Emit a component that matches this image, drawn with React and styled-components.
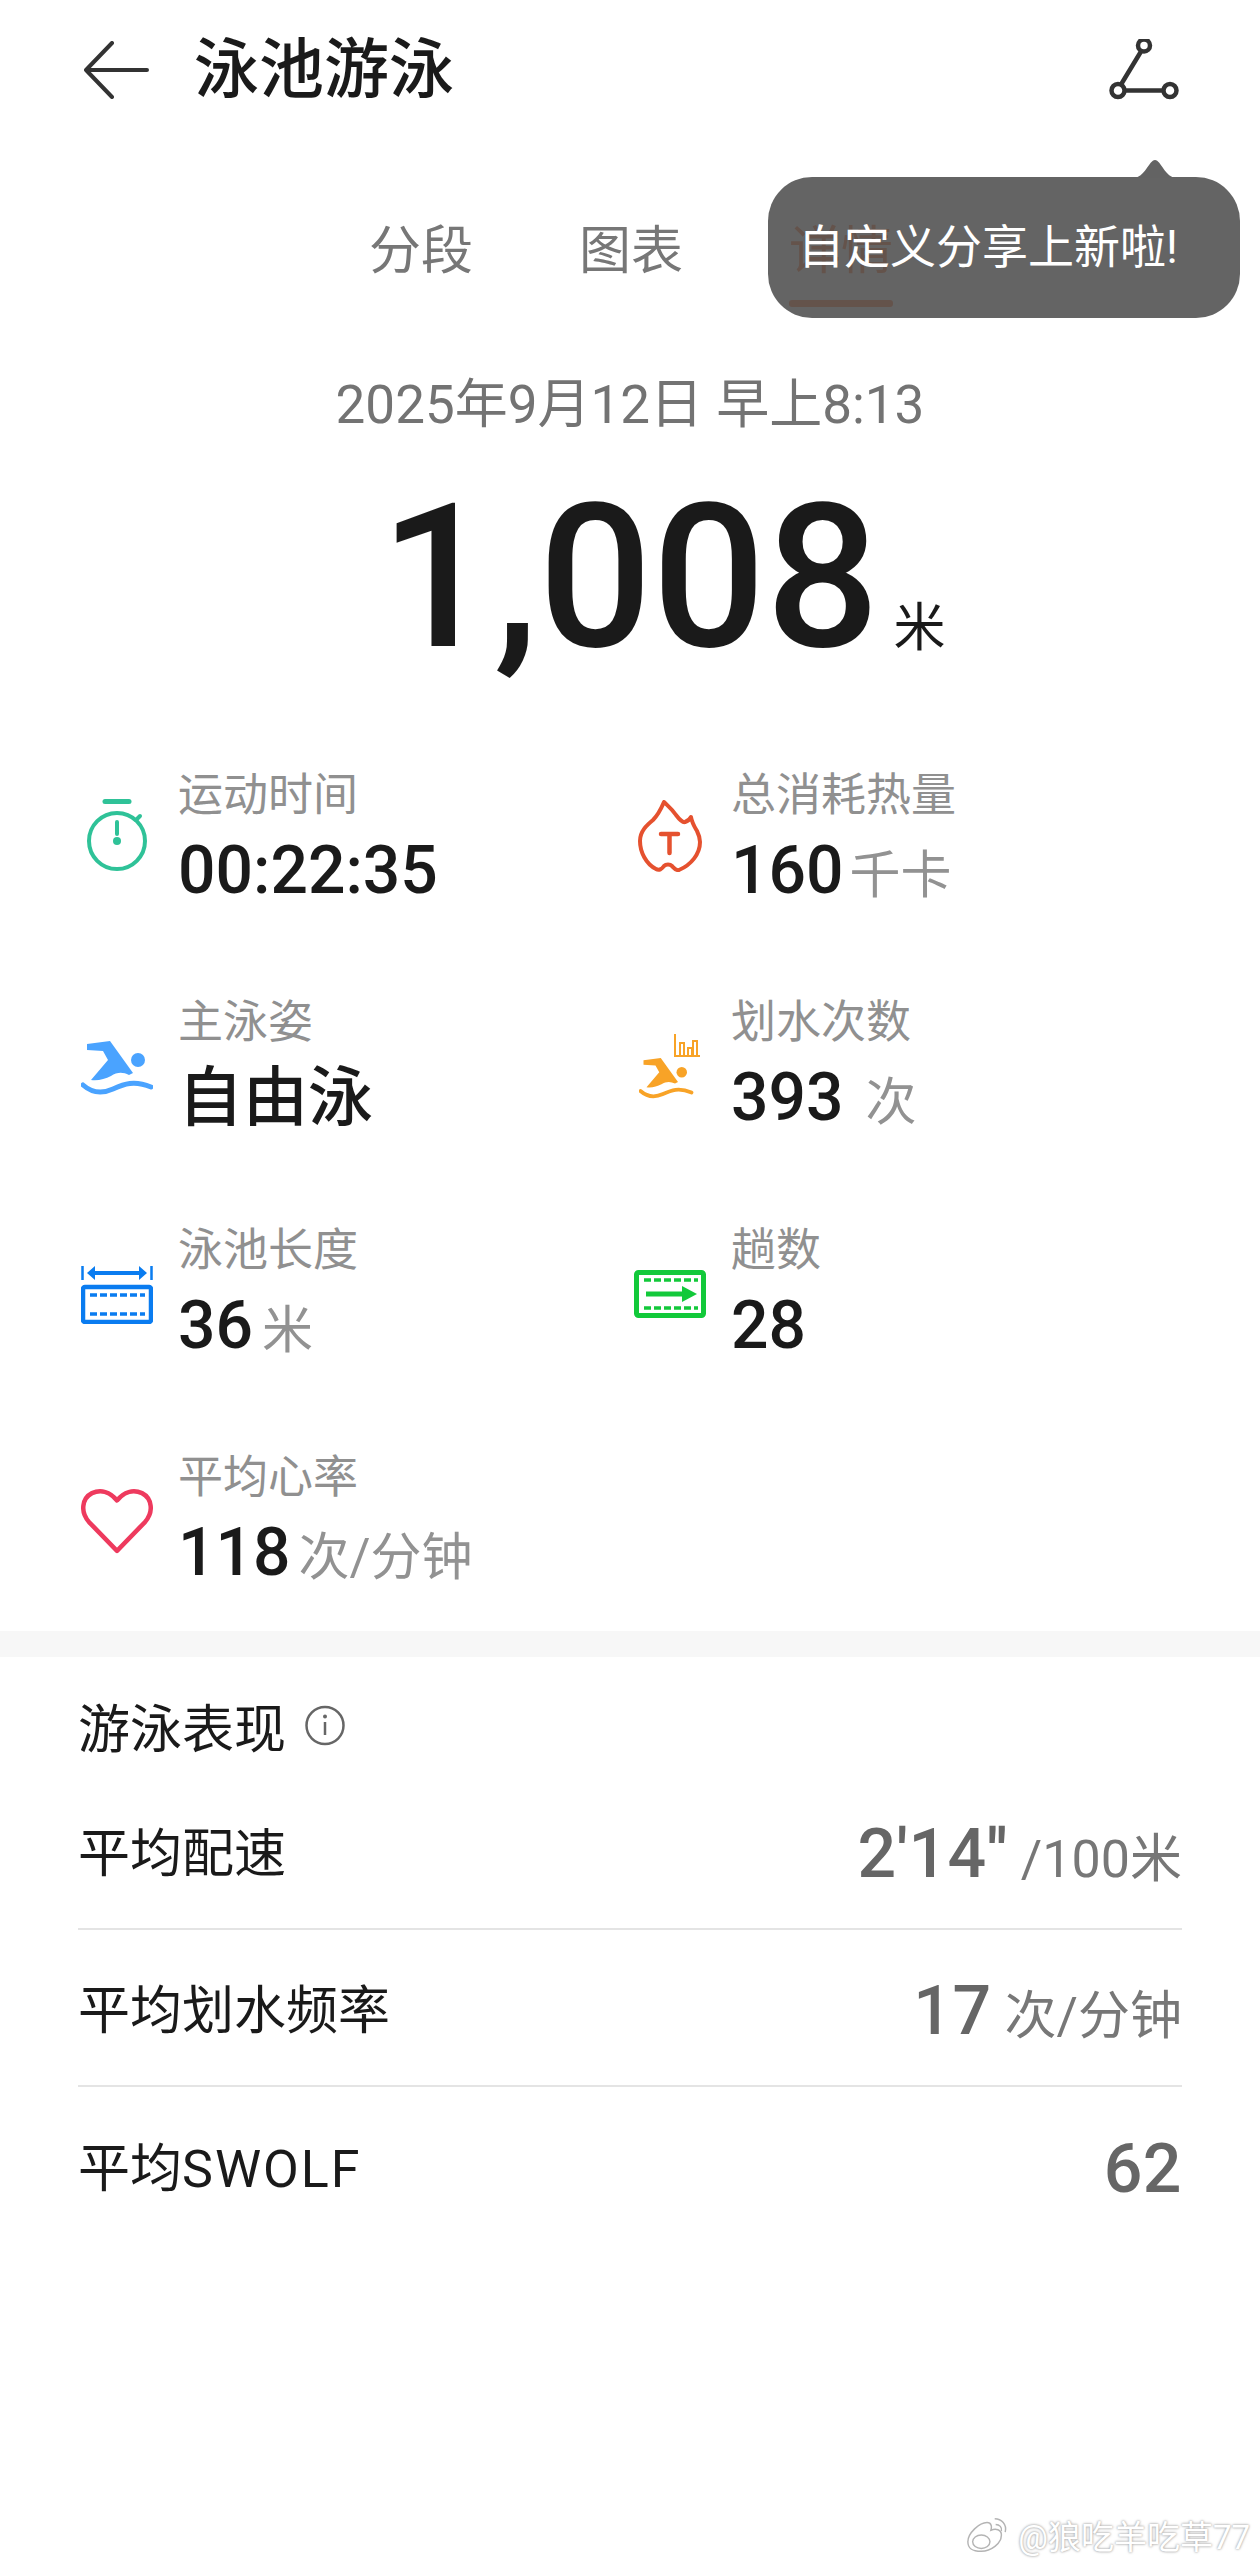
import React from "react";
import styled, { createGlobalStyle } from "styled-components";

const GlobalStyle = createGlobalStyle`
    html, body {
        margin: 0;
        padding: 0;
        background: #fff;
    }
    * {
        box-sizing: border-box;
    }
`;

const Page = styled.div`
    position: relative;
    width: 1260px;
    height: 2568px;
    overflow: hidden;
    background: #fff;
    color: #1a1a1a;
    font-family: Roboto, "Noto Sans CJK SC", sans-serif;
`;

const Header = styled.header`
    height: 136px;
    padding: 4px 81px 0 84px;
    display: flex;
    align-items: center;
`;

const Title = styled.h1`
    margin: 0 0 0 45px;
    flex: 1;
    font-size: 65px;
    line-height: 80px;
    font-weight: 500;
`;

const Tabs = styled.nav`
    height: 172px;
    padding: 83px 0 0 2px;
    display: flex;
    justify-content: center;
    align-items: flex-start;
    gap: 106px;
`;

const Tab = styled.div`
    position: relative;
    font-size: 52px;
    line-height: 66px;
    color: ${(p) => (p.$active ? "#ff7137" : "#777")};
    &::after {
        content: "";
        display: ${(p) => (p.$active ? "block" : "none")};
        position: absolute;
        left: 0;
        right: 0;
        bottom: -22px;
        height: 7px;
        border-radius: 3px;
        background: #ff7137;
    }
`;

const Tooltip = styled.div`
    position: absolute;
    left: 768px;
    top: 177px;
    width: 472px;
    height: 141px;
    padding: 0 0 10px 30px;
    display: flex;
    align-items: center;
    border-radius: 44px;
    background: rgba(78, 78, 78, 0.88);
    color: #fff;
    font-size: 46px;
    svg {
        position: absolute;
        left: 357px;
        top: -17px;
    }
`;

const DateLine = styled.div`
    margin-top: 62px;
    text-align: center;
    font-size: 53px;
    line-height: 70px;
    color: #737373;
`;

const Total = styled.div`
    height: 256px;
    padding: 20px 0 0 380px;
    display: flex;
    align-items: baseline;
    gap: 14px;
`;

const TotalValue = styled.span`
    font-size: 200px;
    line-height: 236px;
    font-weight: 500;
`;

const TotalUnit = styled.span`
    font-size: 52px;
`;

const StatGrid = styled.section`
    padding: 69px 0 0 81px;
    display: grid;
    grid-template-columns: 553px 553px;
    grid-auto-rows: 227.3px;
`;

const Stat = styled.div`
    display: flex;
    gap: 25px;
`;

const IconBox = styled.div`
    width: 72px;
    height: 156px;
    padding-top: ${(p) => p.$top}px;
    display: flex;
    justify-content: center;
    align-items: flex-start;
    flex-shrink: 0;
`;

const StatText = styled.div`
    display: flex;
    flex-direction: column;
`;

const StatLabel = styled.div`
    font-size: 45px;
    line-height: 62px;
    color: #909090;
`;

const StatValue = styled.div`
    height: 88px;
    display: flex;
    align-items: baseline;
    gap: ${(p) => p.$gap}px;
    font-size: ${(p) => (p.$cjk ? 65 : 66)}px;
    line-height: 88px;
    font-weight: 500;
    color: #1a1a1a;
`;

const StatUnit = styled.span`
    font-size: 51px;
    font-weight: 400;
    color: #929292;
`;

const Band = styled.div`
    height: 26px;
    margin-top: -43px;
    background: #f7f7f7;
`;

const Performance = styled.section`
    padding: 0 78px;
`;

const SectionTitle = styled.h2`
    height: 116px;
    margin: 0;
    padding-top: 20px;
    display: flex;
    align-items: center;
    gap: 19px;
    font-size: 52px;
    font-weight: 400;
    color: #1a1a1a;
`;

const MetricRow = styled.div`
    height: 157px;
    padding-bottom: 2px;
    display: flex;
    justify-content: space-between;
    align-items: center;
    border-bottom: ${(p) => (p.$last ? "none" : "2px solid #e4e4e4")};
`;

const MetricName = styled.span`
    font-size: 52px;
    color: #1a1a1a;
`;

const LatinName = styled.span`
    letter-spacing: 2px;
`;

const MetricValue = styled.span`
    padding-top: 8px;
    display: flex;
    align-items: baseline;
    gap: 13px;
    font-size: 68px;
    font-weight: 500;
    letter-spacing: 0.5px;
    color: #666;
`;

const MetricUnit = styled.span`
    font-size: 52px;
    font-weight: 400;
    letter-spacing: 0;
    color: #777;
`;

const Watermark = styled.div`
    position: absolute;
    right: 10px;
    bottom: 9px;
    display: flex;
    align-items: center;
    gap: 7px;
    font-size: 33px;
    color: #fff;
    text-shadow: 0 0 3px #a8a8a8, 0 0 2px #b8b8b8;
`;

const BackIcon = () => (
    <svg width="65" height="58" viewBox="0 0 65 58" fill="none" stroke="#333" strokeWidth="4" strokeLinecap="round" strokeLinejoin="round">
        <path d="M28 2 2 29l26 27M2 29h61" />
    </svg>
);

const ShareIcon = () => (
    <svg width="70" height="62" viewBox="0 1.500 70 62" fill="none" stroke="#333" strokeWidth="4.500">
        <circle cx="35" cy="8" r="6" />
        <circle cx="9" cy="53" r="6.500" />
        <circle cx="61" cy="53" r="6.500" />
        <path d="M32 14 12 47M16 53h38" />
    </svg>
);

const Stopwatch = () => (
    <svg width="62" height="72" viewBox="0 0 62 72" fill="none" stroke="#2fc298" strokeWidth="4" strokeLinecap="round">
        <path d="M19 2.500h24" strokeWidth="5" />
        <circle cx="31" cy="42" r="28" />
        <path d="M50 21l4-4M31 23v12" />
        <circle cx="31" cy="42" r="4" fill="#2fc298" stroke="none" />
    </svg>
);

const Flame = () => (
    <svg width="64" height="72" viewBox="0 0 64 72" fill="none" stroke="#e5512f" strokeWidth="4" strokeLinecap="round" strokeLinejoin="round">
        <path d="M26 2C30 6 34 9 38 15 41 19 45 23 47 22 50 21 52 19 53 17 54 23 56 26 59 31 61 35 62 38 62 42 62 54 53 65 41 70 38 71 36 68 34 66 32 64 28 64 26 66 24 69 21 71 18 69 8 64 2 52 2 41 2 31 9 25 15 20 20 15 23 9 26 2z" />
        <path d="M23 34h17M31.500 34v19" strokeWidth="4.500" />
    </svg>
);

const Swimmer = ({ color }) => (
    <svg width="72" height="56" viewBox="0 0 72 56" fill={color}>
        <path d="M6 3 29 0 l23 32 -4 2c-6 -3 -12 -3 -18 1 -6 3 -13 5 -20 4 l17 -20 -5 -9 -16 -1z" />
        <circle cx="57" cy="19" r="7" />
        <path d="M2 44c9 8 19 9 30 4s21-9 38-2" fill="none" stroke={color} strokeWidth="5" strokeLinecap="round" />
    </svg>
);

const SwimmerBars = () => (
    <svg width="62" height="68" viewBox="0 0 62 68" fill="none" stroke="#f8a327">
        <g strokeWidth="2">
            <path d="M36 1v22h25" />
            <path d="M41 23V10h4v13M49 23v-8h4v8M54 23V8h4v15" />
        </g>
        <g transform="translate(0 25) scale(.75)" fill="#f8a327" stroke="none">
            <path d="M6 3 29 0 l23 32 -4 2c-6 -3 -12 -3 -18 1 -6 3 -13 5 -20 4 l17 -20 -5 -9 -16 -1z" />
            <circle cx="57" cy="19" r="7" />
            <path d="M2 44c9 8 19 9 30 4s21-9 38-2" fill="none" stroke="#f8a327" strokeWidth="5" strokeLinecap="round" />
        </g>
    </svg>
);

const PoolLength = () => (
    <svg width="72" height="58" viewBox="0 0 72 58" fill="none" stroke="#0a7cf0">
        <path d="M1.500 0v14M70.500 0v14" strokeWidth="2.500" />
        <path d="M12 7h48" strokeWidth="4" />
        <path d="M14 0 6 7l8 7zM58 0l8 7-8 7z" fill="#0a7cf0" stroke="none" />
        <rect x="2" y="21" width="68" height="35" rx="2" strokeWidth="4.500" />
        <path d="M9 29h55M9 48h55" strokeWidth="3.500" strokeDasharray="7 3" />
    </svg>
);

const Laps = () => (
    <svg width="72" height="48" viewBox="0 0 72 48" fill="none" stroke="#12c93a">
        <rect x="2.500" y="2.500" width="67" height="43" rx="2" strokeWidth="5" />
        <path d="M10 10h54M10 38h54" strokeWidth="3.500" strokeDasharray="7 3" />
        <path d="M12 24h42" strokeWidth="5" />
        <path d="M48 16l15 8-15 8z" fill="#12c93a" stroke="none" />
    </svg>
);

const Heart = () => (
    <svg width="72" height="66" viewBox="0 0 72 64" preserveAspectRatio="none" fill="none" stroke="#ee3a5e" strokeWidth="4.500" strokeLinejoin="round">
        <path d="M36 61 8 33C-1 23 1 10 11 5c9-4 18-1 25 7 7-8 16-11 25-7 10 5 12 18 3 28z" />
    </svg>
);

const InfoIcon = () => (
    <svg width="40" height="41" viewBox="0 0 40 41" fill="none" stroke="#666" strokeWidth="2.500">
        <circle cx="20" cy="20.500" r="18.500" />
        <path d="M20 17v13" />
        <circle cx="20" cy="11.500" r="2" fill="#666" stroke="none" />
    </svg>
);

const WeiboIcon = () => (
    <svg width="46" height="40" viewBox="0 0 48 40" fill="#fff" stroke="#b4b4b4" strokeWidth="1.500">
        <path d="M3 27c0-9 12-20 20-20 5 0 5 5 4 8 5-2 11-1 11 5 0 9-11 17-21 17S3 34 3 27z" />
        <ellipse cx="17" cy="27" rx="9" ry="7" />
        <path d="M31 3c7 0 13 6 11 14M32 9c4 0 7 3 6 7" fill="none" />
    </svg>
);

const stats = [
    { label: "运动时间", value: "00:22:35", icon: <Stopwatch />, top: 34 },
    { label: "总消耗热量", value: "160", unit: "千卡", gap: 6, icon: <Flame />, top: 35 },
    { label: "主泳姿", value: "自由泳", cjk: true, icon: <Swimmer color="#4aa3ff" />, top: 49 },
    { label: "划水次数", value: "393", unit: "次", gap: 22, icon: <SwimmerBars />, top: 41 },
    { label: "泳池长度", value: "36", unit: "米", gap: 9, icon: <PoolLength />, top: 46 },
    { label: "趟数", value: "28", icon: <Laps />, top: 50 },
    { label: "平均心率", value: "118", unit: "次/分钟", gap: 8, icon: <Heart />, top: 41 },
];

const metrics = [
    { name: "平均配速", value: "2'14''", unit: "/100米" },
    { name: "平均划水频率", value: "17", unit: "次/分钟" },
    { name: "平均", latin: "SWOLF", value: "62", last: true },
];

const App = () => (
    <Page>
        <GlobalStyle />
        <Header>
            <BackIcon />
            <Title>泳池游泳</Title>
            <ShareIcon />
        </Header>
        <Tabs>
            <Tab>分段</Tab>
            <Tab>图表</Tab>
            <Tab $active>详情</Tab>
        </Tabs>
        <Tooltip>
            <svg width="60" height="18" viewBox="0 0 60 18" fill="#636363">
                <path d="M8 18C20 18 24 0 30 0s10 18 22 18z" />
            </svg>
            自定义分享上新啦!
        </Tooltip>
        <DateLine>2025年9月12日 早上8:13</DateLine>
        <Total>
            <TotalValue>1,008</TotalValue>
            <TotalUnit>米</TotalUnit>
        </Total>
        <StatGrid>
            {stats.map((s) => (
                <Stat key={s.label}>
                    <IconBox $top={s.top}>{s.icon}</IconBox>
                    <StatText>
                        <StatLabel>{s.label}</StatLabel>
                        <StatValue $gap={s.gap} $cjk={s.cjk}>
                            {s.value}
                            {s.unit && <StatUnit>{s.unit}</StatUnit>}
                        </StatValue>
                    </StatText>
                </Stat>
            ))}
        </StatGrid>
        <Band />
        <Performance>
            <SectionTitle>
                游泳表现
                <InfoIcon />
            </SectionTitle>
            {metrics.map((m) => (
                <MetricRow key={m.name + (m.latin || "")} $last={m.last}>
                    <MetricName>
                        {m.name}
                        {m.latin && <LatinName>{m.latin}</LatinName>}
                    </MetricName>
                    <MetricValue>
                        {m.value}
                        {m.unit && <MetricUnit>{m.unit}</MetricUnit>}
                    </MetricValue>
                </MetricRow>
            ))}
        </Performance>
        <Watermark>
            <WeiboIcon />
            @狼吃羊吃草77
        </Watermark>
    </Page>
);

export default App;
